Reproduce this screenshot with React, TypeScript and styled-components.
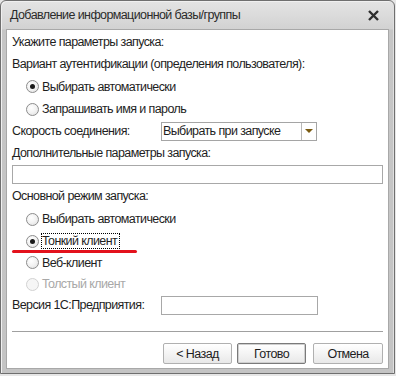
import React from "react";
import styled, { createGlobalStyle } from "styled-components";

const Global = createGlobalStyle`
  html, body { margin: 0; padding: 0; }
  body {
    width: 396px; height: 376px; overflow: hidden;
    background: #e6e6e6;
    font-family: "Liberation Sans", Arial, sans-serif;
  }
`;

const Page = styled.div`
  position: relative;
  width: 396px;
  height: 376px;
`;

const Window = styled.div`
  width: 395px;
  height: 374px;
  border: 1px solid #6f6f6f;
  border-radius: 6px 6px 0 0;
  background: linear-gradient(to bottom, #e4e4e4 0px, #d2d2d2 28px, #c6c6c6 29px, #c4c4c4 100%);
  box-shadow: inset 1px 1px 0 #f0f0f0, inset -1px 0 0 #e0e0e0;
  display: flex;
  flex-direction: column;
  box-sizing: border-box;
  padding: 0 5px 4px 5px;
`;

const TitleBar = styled.div`
  height: 28px;
  flex-shrink: 0;
  display: flex;
  align-items: center;
  justify-content: space-between;
  padding-left: 4px;
  padding-right: 10px;
`;

const TitleText = styled.span`
  font-size: 12.5px;
  color: #2b2b2b;
  letter-spacing: -0.6px;
`;

const Content = styled.div`
  flex: 1;
  background: #ffffff;
  border: 1px solid #a8a8a8;
  display: flex;
  flex-direction: column;
  padding: 0 5px 0 4px;
  font-size: 12.5px;
  letter-spacing: -0.6px;
  color: #1e1e1e;
`;

const Row = styled.div<{ $h: number; $indent?: number; $mt?: number }>`
  height: ${(p) => p.$h}px;
  flex-shrink: 0;
  margin-top: ${(p) => p.$mt ?? 0}px;
  display: flex;
  align-items: center;
  padding-left: ${(p) => p.$indent ?? 0}px;
  white-space: nowrap;
`;

const FieldLabel = styled.span`
  width: 149px;
  flex-shrink: 0;
`;

const Circle = styled.span<{ $disabled?: boolean }>`
  width: 11px;
  height: 11px;
  border-radius: 50%;
  border: 1px solid ${(p) => (p.$disabled ? "#d2d2d2" : "#8c8c8c")};
  background: ${(p) =>
    p.$disabled
      ? "#f6f6f6"
      : "radial-gradient(circle at 40% 35%, #ffffff 0%, #f2f2f2 50%, #dcdcdc 100%)"};
  display: flex;
  align-items: center;
  justify-content: center;
  flex-shrink: 0;
  margin-right: 2px;
`;

const Dot = styled.span`
  width: 5px;
  height: 5px;
  border-radius: 50%;
  background: #1a1a1a;
`;

const RadioText = styled.span<{ $disabled?: boolean; $focused?: boolean }>`
  color: ${(p) => (p.$disabled ? "#a8a8a8" : "inherit")};
  padding: 0 2px 0 0;
  border: 1px dotted ${(p) => (p.$focused ? "#000" : "transparent")};
  line-height: 14px;
`;

const Select = styled.div`
  width: 156px;
  height: 19px;
  box-sizing: border-box;
  border: 1px solid #a5a5a5;
  display: flex;
  align-items: stretch;
`;

const SelectValue = styled.span`
  flex: 1;
  padding-left: 1px;
  display: flex;
  align-items: center;
`;

const SelectButton = styled.span`
  width: 14px;
  border-left: 1px solid #b8b8b8;
  display: flex;
  align-items: center;
  justify-content: center;
`;

const Arrow = styled.span`
  width: 0;
  height: 0;
  border-left: 4px solid transparent;
  border-right: 4px solid transparent;
  border-top: 4px solid #7a5a10;
`;

const TextInput = styled.div<{ $w?: number }>`
  width: ${(p) => (p.$w ? `${p.$w}px` : "100%")};
  height: 19px;
  box-sizing: border-box;
  border: 1px solid #a8a8a8;
  background: #fff;
`;

const Separator = styled.div`
  height: 1px;
  flex-shrink: 0;
  background: #a0a0a0;
  margin: 16px 0 0 1px;
`;

const ButtonBar = styled.div`
  display: flex;
  flex-shrink: 0;
  justify-content: flex-end;
  gap: 5px;
  margin-top: 11px;
`;

const Button = styled.div<{ $default?: boolean; $w: number; $ml?: number }>`
  width: ${(p) => p.$w}px;
  height: 21px;
  margin-left: ${(p) => p.$ml ?? 0}px;
  box-sizing: border-box;
  border: 1px solid ${(p) => (p.$default ? "#7a7a7a" : "#b0b0b0")};
  box-shadow: ${(p) => (p.$default ? "inset 0 0 0 1px #cfcfcf" : "none")};
  border-radius: 2px;
  background: linear-gradient(to bottom, #ffffff 0%, #f4f4f4 50%, #e8e8e8 100%);
  display: flex;
  align-items: center;
  justify-content: center;
  color: #1e1e1e;
`;

const RedMark = styled.span`
  position: absolute;
  left: 12px;
  top: 250px;
  width: 125px;
  height: 3px;
  border-radius: 2px;
  background: #e3121c;
`;

const Radio: React.FC<{
  label: string;
  checked?: boolean;
  disabled?: boolean;
  focused?: boolean;
  h: number;
}> = ({ label, checked, disabled, focused, h }) => (
  <Row $h={h} $indent={15}>
    <Circle $disabled={disabled}>{checked && <Dot />}</Circle>
    <RadioText $disabled={disabled} $focused={focused}>
      {label}
    </RadioText>
  </Row>
);

export default function App() {
  return (
    <Page>
      <Global />
      <Window>
        <TitleBar>
          <TitleText>Добавление информационной базы/группы</TitleText>
          <svg width="11" height="11" viewBox="0 0 11 11">
            <path d="M1 1 L10 10 M10 1 L1 10" stroke="#2e2e2e" strokeWidth="2.4" />
          </svg>
        </TitleBar>
        <Content>
          <Row $h={22} $mt={1} $indent={1}>Укажите параметры запуска:</Row>
          <Row $h={22} $indent={1}>Вариант аутентификации (определения пользователя):</Row>
          <Radio h={23} label="Выбирать автоматически" checked />
          <Radio h={22} label="Запрашивать имя и пароль" />
          <Row $h={22} $indent={1}>
            <FieldLabel>Скорость соединения:</FieldLabel>
            <Select>
              <SelectValue>Выбирать при запуске</SelectValue>
              <SelectButton>
                <Arrow />
              </SelectButton>
            </Select>
          </Row>
          <Row $h={22} $indent={1}>Дополнительные параметры запуска:</Row>
          <Row $h={20} $indent={1}>
            <TextInput />
          </Row>
          <Row $h={24} $indent={1}>Основной режим запуска:</Row>
          <Radio h={22} label="Выбирать автоматически" />
          <Radio h={22} label="Тонкий клиент" checked focused />
          <Radio h={21} label="Веб-клиент" />
          <Radio h={22} label="Толстый клиент" disabled />
          <Row $h={20} $indent={1}>
            <FieldLabel>Версия 1С:Предприятия:</FieldLabel>
            <TextInput $w={157} />
          </Row>
          <Separator />
          <ButtonBar>
            <Button $w={69}>&lt; Назад</Button>
            <Button $w={69} $default>Готово</Button>
            <Button $w={70} $ml={2}>Отмена</Button>
          </ButtonBar>
        </Content>
      </Window>
      <RedMark />
    </Page>
  );
}
